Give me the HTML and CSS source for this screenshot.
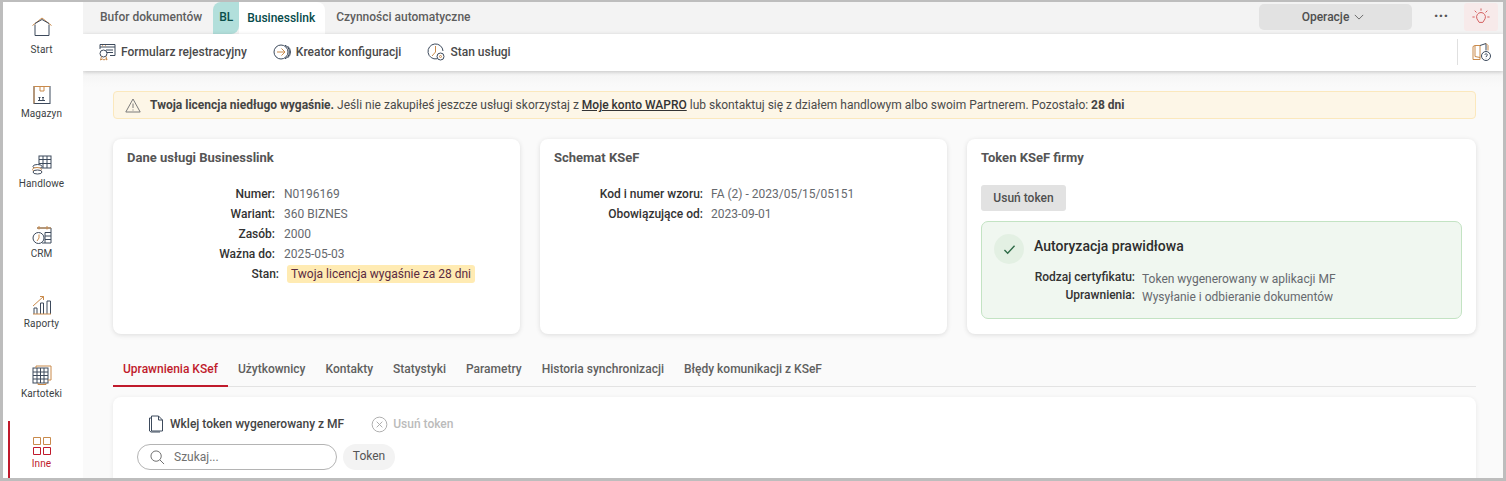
FILE: index.html
```html
<!DOCTYPE html>
<html lang="pl">
<head>
<meta charset="utf-8">
<title>Businesslink</title>
<link rel="stylesheet" href="styles.css">
</head>
<body>
<div class="frame">
  <nav class="side">
    <a class="nav nav-first">
      <svg class="nav-ico" viewBox="0 0 20 20"><path class="o" d="M0.500 8.500 10 1l9.500 7.500"/><path class="b" d="M3 7.500V18.500H17V7.500M3 6.500 10 2.500l7 4"/></svg>
      <span>Start</span>
    </a>
    <a class="nav">
      <svg class="nav-ico" viewBox="0 0 20 20"><rect class="b" x="2" y="1.500" width="16" height="17"/><path class="o" d="M8 2v4h4V2M2 1.500h16M2 1.500v17"/><path class="b" d="M7.500 15v-3M6.500 12.500h2M11 15v-3M10 12.500h2M6 15.500h7"/></svg>
      <span>Magazyn</span>
    </a>
    <a class="nav">
      <svg class="nav-ico" viewBox="0 0 20 20"><rect class="b" x="7" y="1" width="12" height="12"/><path class="b" d="M7 4.500h12M7 8.500h12M11 1v12M15 1v12"/><ellipse class="fill-w b" cx="5.500" cy="11.500" rx="4.500" ry="2"/><ellipse class="fill-w o" cx="5" cy="14.500" rx="4.500" ry="2"/><ellipse class="fill-w b" cx="5.500" cy="17" rx="4.500" ry="2"/></svg>
      <span>Handlowe</span>
    </a>
    <a class="nav">
      <svg class="nav-ico" viewBox="0 0 20 20"><path class="b" d="M5 3h14v15H10M13 7.500h6M13 11h6M13 14.500h6M13 7.500V18"/><path class="o" d="M7 1v3.500M15 1v3.500M5 3h14"/><circle class="fill-w b" cx="6.500" cy="13" r="5.500"/><path class="o" d="M7 9.500V13L5 16"/></svg>
      <span>CRM</span>
    </a>
    <a class="nav">
      <svg class="nav-ico" viewBox="0 0 20 20"><path class="b" d="M2 19v-6h3v6M8.500 19V8h3v11M15 19V6h3.500v13"/><path class="o" d="M1 11 11.500 1.500M8 1.500h3.500V5M1 19h18"/></svg>
      <span>Raporty</span>
    </a>
    <a class="nav">
      <svg class="nav-ico" viewBox="0 0 20 20"><rect class="b" x="1" y="3" width="15" height="15"/><path class="b" d="M1 7h15M1 10.500h15M1 14h15M5 3v15M8.500 3v15M12 3v15"/><path class="o" d="M4 3V1h15v14h-3M6 18v1.500h8V18"/></svg>
      <span>Kartoteki</span>
    </a>
    <a class="nav nav-active">
      <svg class="nav-ico" viewBox="0 0 20 20"><path class="o" d="M1.500 1.500h7v7h-7zM11.500 1.500h7v7h-7z"/><path class="r" d="M1.500 11.500h7v7h-7zM11.500 11.500h7v7h-7z"/></svg>
      <span>Inne</span>
    </a>
  </nav>

  <div class="main">
    <header class="tabs">
      <a class="tab">Bufor dokumentów</a>
      <a class="tab-badge">BL</a>
      <a class="tab-current">Businesslink</a>
      <a class="tab tab-last">Czynności automatyczne</a>
      <button class="ops">Operacje
        <svg class="chev" viewBox="0 0 12 7"><path d="M1 1l5 5 5-5"/></svg>
      </button>
      <span class="dots">···</span>
      <span class="bulb">
        <svg viewBox="0 0 20 20"><path d="M10 5a5 5 0 0 1 4.500 7L12 16H8l-2.500-4A5 5 0 0 1 10 5z"/><path d="M10 0.500v2.500M3 3l2 2M17 3l-2 2M0.500 10h2.500M17 10h2.500"/></svg>
      </span>
    </header>

    <div class="toolbar">
      <a class="tool">
        <svg class="tool-ico" viewBox="0 0 18 18"><path class="b" d="M2 6V1.500h15v11h-5M2 4h15M8 7h7M9 9.500h6"/><path class="o" d="M4 2.800h1M7 2.800h1"/><circle class="b" cx="5.500" cy="10.500" r="3.500"/><path class="o" d="M3.500 13.500 2.500 17l2-1 1.500 1 1.500-1 1.500 1-1-3.500"/></svg>
        Formularz rejestracyjny
      </a>
      <a class="tool">
        <svg class="tool-ico" viewBox="0 0 18 18"><circle class="b" cx="8" cy="9" r="7"/><path class="o" d="M4 9h7M8.500 5.500 12 9l-3.500 3.500"/><path class="b" d="M12 2.200a7.500 7.500 0 0 1 0 13.600M14.500 3a7.500 7.500 0 0 1 0 12"/></svg>
        Kreator konfiguracji
      </a>
      <a class="tool">
        <svg class="tool-ico" viewBox="0 0 18 18"><path class="b" d="M10 15.800A7.500 7.500 0 1 1 16 8"/><path class="o" d="M8.500 3v6L5 13"/><circle class="b" cx="13.500" cy="13.500" r="3.500"/><circle class="o" cx="13.500" cy="13.500" r="1"/></svg>
        Stan usługi
      </a>
      <span class="tool-sep"></span>
      <svg class="book" viewBox="0 0 20 20"><path class="o" d="M3 3.500 1 4.500v13h7V3.500H3zM3 3.500v11l5 1"/><path class="b" d="M8 3.500 14 1.500v7"/><path class="o" d="M14 1.500l2 2v5"/><circle class="b" cx="14" cy="14" r="4.500"/><path class="b" d="M12.800 12.800c.3-1.500 2.700-1.300 2.500.3-.1.800-1.300.9-1.300 2M14 16.500v.3"/></svg>
    </div>

    <main class="content">
      <div class="alert">
        <svg class="alert-ico" viewBox="0 0 16 15"><path d="M8 1 .8 14h14.400zM8 5.500v4.500M8 11.500v1"/></svg>
        <p><b>Twoja licencja niedługo wygaśnie.</b> Jeśli nie zakupiłeś jeszcze usługi skorzystaj z <a class="link">Moje konto WAPRO</a> lub skontaktuj się z działem handlowym albo swoim Partnerem. Pozostało: <b>28 dni</b></p>
      </div>

      <section class="cards">
        <article class="card">
          <h2>Dane usługi Businesslink</h2>
          <dl class="data data-service">
            <dt>Numer:</dt><dd>N0196169</dd>
            <dt>Wariant:</dt><dd>360 BIZNES</dd>
            <dt>Zasób:</dt><dd>2000</dd>
            <dt>Ważna do:</dt><dd>2025-05-03</dd>
            <dt class="dt-state">Stan:</dt><dd><span class="pill">Twoja licencja wygaśnie za 28 dni</span></dd>
          </dl>
        </article>
        <article class="card">
          <h2>Schemat KSeF</h2>
          <dl class="data data-schema">
            <dt>Kod i numer wzoru:</dt><dd>FA (2) - 2023/05/15/05151</dd>
            <dt>Obowiązujące od:</dt><dd>2023-09-01</dd>
          </dl>
        </article>
        <article class="card card-token">
          <h2>Token KSeF firmy</h2>
          <button class="btn-grey">Usuń token</button>
          <div class="auth">
            <span class="check"><svg viewBox="0 0 14 12"><path d="M1.500 6.500 5 10l7.500-8"/></svg></span>
            <div class="auth-body">
              <h3>Autoryzacja prawidłowa</h3>
              <dl class="auth-data">
                <dt>Rodzaj certyfikatu:</dt><dd>Token wygenerowany w aplikacji MF</dd>
                <dt>Uprawnienia:</dt><dd>Wysyłanie i odbieranie dokumentów</dd>
              </dl>
            </div>
          </div>
        </article>
      </section>

      <div class="subtabs">
        <a class="subtab subtab-active">Uprawnienia KSef</a>
        <a class="subtab">Użytkownicy</a>
        <a class="subtab">Kontakty</a>
        <a class="subtab">Statystyki</a>
        <a class="subtab">Parametry</a>
        <a class="subtab">Historia synchronizacji</a>
        <a class="subtab">Błędy komunikacji z KSeF</a>
      </div>

      <section class="panel">
        <div class="panel-actions">
          <a class="action">
            <svg class="act-ico" viewBox="0 0 16 18"><path class="b" d="M3.500 3H1.500v13l1.500 1h9" /><path class="b" d="M3.500 1h7l4 4v11h-11zM10.500 1v4h4"/></svg>
            Wklej token wygenerowany z MF
          </a>
          <a class="action action-off">
            <svg class="act-ico" viewBox="0 0 18 18"><circle cx="9" cy="9" r="7.800"/><path d="M6 6l6 6M12 6l-6 6"/></svg>
            Usuń token
          </a>
        </div>
        <div class="search-row">
          <label class="search">
            <svg class="search-ico" viewBox="0 0 16 16"><circle cx="6.500" cy="6.500" r="5.500"/><path d="M10.500 10.500 15 15"/></svg>
            <span>Szukaj...</span>
          </label>
          <span class="chip">Token</span>
        </div>
      </section>
    </main>
  </div>
</div>
</body>
</html>
```

FILE: styles.css
```css
* { box-sizing: border-box; }
html, body { margin: 0; height: 100%; overflow: hidden; }
body { font: 12px/16px Roboto, sans-serif; color: #444; }
h2, h3, p, dl, dd { margin: 0; }
button { font: inherit; border: 0; }

svg { fill: none; stroke-width: 1; display: block; }
.b { stroke: #3d4a5c; }
.o { stroke: #c98a4b; }
.r { stroke: #c01a2c; }
.fill-w { fill: #fff; }

.frame {
  display: flex;
  width: 1506px;
  height: 481px;
  border: solid #bdbdbd;
  border-width: 2px 3px 3px;
  overflow: hidden;
}

/* side navigation */
.side {
  width: 80px;
  flex: none;
  background: #fff;
  padding-left: 5px;
  z-index: 2;
}
.nav {
  display: flex;
  flex-direction: column;
  align-items: center;
  height: 70px;
  padding-top: 19px;
  padding-right: 13px;
  font-size: 10px;
  line-height: 14px;
  letter-spacing: .1px;
  color: #3c3f44;
  border-left: 2px solid transparent;
  margin-right: -3px;
}
.nav-first { height: 64px; padding-top: 15px; }
.nav-ico { width: 20px; height: 20px; margin-bottom: 2px; }
.nav-first .nav-ico { margin-bottom: 6px; }
.nav-active {
  height: 65px;
  margin-top: 5px;
  padding-top: 15px;
  border-left-color: #c01a2c;
  color: #c01a2c;
}
.nav-active .nav-ico { margin-bottom: 1px; }

.main { flex: 1; min-width: 0; display: flex; flex-direction: column; background: #fafafa; }

/* top tabs */
.tabs {
  display: flex;
  align-items: stretch;
  height: 32px;
  background: #f3f3f3;
  flex: none;
}
.tab { padding: 0 10px 0 17px; line-height: 31px; font-weight: 500; color: #5e5e5e; }
.tab-last { padding-left: 11px; }
.tab-badge {
  width: 26px;
  margin-left: 1px;
  text-align: center;
  line-height: 31px;
  background: #b2dfdb;
  color: #0b4f4a;
  font-weight: 500;
  border-radius: 8px 0 8px 0;
}
.tab-current {
  width: 86px;
  padding-left: 8px;
  line-height: 33px;
  background: #fff;
  color: #064a4a;
  font-weight: 500;
  border-radius: 0 8px 0 0;
}
.ops {
  display: flex;
  align-items: center;
  justify-content: center;
  gap: 5px;
  width: 153px;
  height: 26px;
  margin: 2px 0 0 auto;
  padding: 0 5px 0 0;
  background: #e2e2e2;
  border-radius: 5px;
  font-weight: 500;
  color: #4f4f4f;
}
.chev { width: 10px; height: 6px; }
.chev path { stroke: #555; }
.dots { width: 52px; padding-left: 6px; text-align: center; line-height: 28px; font-size: 16px; font-weight: 700; color: #555; }
.bulb {
  display: flex;
  align-items: center;
  justify-content: center;
  width: 34px;
  height: 28px;
  margin: 1px 5px 0 0;
  background: #f7eaea;
  border-radius: 3px;
}
.bulb svg { width: 18px; height: 18px; stroke: #d05050; }

/* toolbar */
.toolbar {
  display: flex;
  align-items: center;
  height: 37px;
  flex: none;
  padding: 0 11px 2px 15px;
  background: #fff;
  box-shadow: 0 1px 4px rgba(0, 0, 0, .2);
  z-index: 1;
}
.tool { display: flex; align-items: center; gap: 5px; margin-right: 26px; font-weight: 500; color: #4a4a4a; }
.tool-ico { width: 18px; height: 18px; }
.tool-sep { width: 1px; height: 26px; margin-left: auto; background: #e0e0e0; }
.book { width: 20px; height: 20px; margin-left: 14px; }

/* content */
.content {
  flex: 1;
  min-height: 0;
  padding: 20px 27px 0 30px;
  overflow: hidden;
  background: linear-gradient(#f4f4f4, #fafafa 16px);
}
.alert {
  display: flex;
  align-items: center;
  gap: 9px;
  height: 28px;
  padding: 0 11px;
  background: #fdf6e7;
  border: 1px solid #fbe8bd;
  border-radius: 4px;
  color: #4a4a4a;
}
.alert b { font-weight: 700; color: #444; }
.alert-ico { width: 16px; height: 15px; }
.alert-ico path { stroke: #7a7a7a; }
.link { font-weight: 500; text-decoration: underline; color: #333; }

.cards { display: flex; gap: 20px; margin-top: 20px; height: 195px; }
.card {
  flex: 0 0 407px;
  padding: 11px 14px;
  background: #fff;
  border-radius: 8px;
  box-shadow: 0 1px 5px rgba(0, 0, 0, .12);
}
.card-token { flex: 1; }
.card h2 { font-size: 13px; line-height: 16px; font-weight: 700; color: #555; }

.data {
  display: grid;
  row-gap: 4px;
  margin-top: 20px;
}
.data-service { grid-template-columns: 149px 1fr; }
.data-schema { grid-template-columns: 149px 1fr; }
.data dt { padding-right: 1px; text-align: right; font-weight: 500; color: #333; }
.data-schema dt { padding-right: 0; }
.data dd { padding-left: 8px; color: #66696e; }
.dt-state { position: relative; left: 4px; }
.pill {
  display: inline-block;
  margin-left: 3px;
  margin-top: -1px;
  padding: 0 4px;
  height: 18px;
  line-height: 18px;
  background: #ffebb3;
  border-radius: 3px;
  color: #5a2a40;
  vertical-align: top;
}

.btn-grey {
  display: block;
  width: 85px;
  height: 26px;
  margin-top: 19px;
  background: #e2e2e2;
  border-radius: 3px;
  font-weight: 500;
  color: #4f4f4f;
}
.auth {
  display: flex;
  gap: 10px;
  height: 98px;
  margin-top: 10px;
  padding: 12px 12px;
  background: #f0f7f0;
  border: 1px solid #c3e3c3;
  border-radius: 7px;
}
.check {
  display: flex;
  align-items: center;
  justify-content: center;
  width: 30px;
  height: 30px;
  flex: none;
  background: #e3f0e3;
  border-radius: 50%;
}
.check svg { width: 13px; height: 11px; stroke: #2e6b47; stroke-width: 1.500; }
.auth-body { flex: 1; }
.auth h3 { font-size: 14px; line-height: 18px; font-weight: 500; color: #2d2d2d; margin-top: 3px; }
.auth-data {
  display: grid;
  grid-template-columns: 101px 1fr;
  margin-top: 14px;
}
.auth-data dt { text-align: right; font-weight: 500; color: #333; white-space: nowrap; }
.auth-data dd { padding: 2px 0 0 7px; color: #66696e; }

.subtabs {
  display: flex;
  height: 33px;
  margin-top: 20px;
  border-bottom: 1px solid #e3e3e3;
}
.subtab { padding: 0 10px; line-height: 31px; font-weight: 500; color: #60605e; }
.subtab-active { color: #c01a2c; border-bottom: 2px solid #c01a2c; height: 33px; }

.panel {
  margin-top: 10px;
  height: 120px;
  padding: 18px 24px;
  background: #fff;
  border-radius: 8px 8px 0 0;
  box-shadow: 0 1px 5px rgba(0, 0, 0, .08);
}
.panel-actions { display: flex; align-items: center; gap: 27px; padding-left: 11px; }
.action { display: flex; align-items: center; gap: 6px; font-weight: 500; color: #444; }
.act-ico { width: 16px; height: 18px; }
.action-off { gap: 5px; color: #bbb; }
.action-off .act-ico { width: 17px; height: 17px; }
.action-off svg { stroke: #aaa; }
.search-row { display: flex; align-items: center; gap: 6px; margin-top: 11px; }
.search {
  display: flex;
  align-items: center;
  gap: 9px;
  width: 200px;
  height: 26px;
  padding-left: 12px;
  border: 1px solid #b4b4b4;
  border-radius: 13px;
  color: #707070;
}
.search-ico { width: 15px; height: 15px; stroke: #666; }
.chip {
  width: 52px;
  height: 26px;
  line-height: 25px;
  text-align: center;
  background: #f3f3f3;
  border-radius: 13px;
  color: #555;
}
```
